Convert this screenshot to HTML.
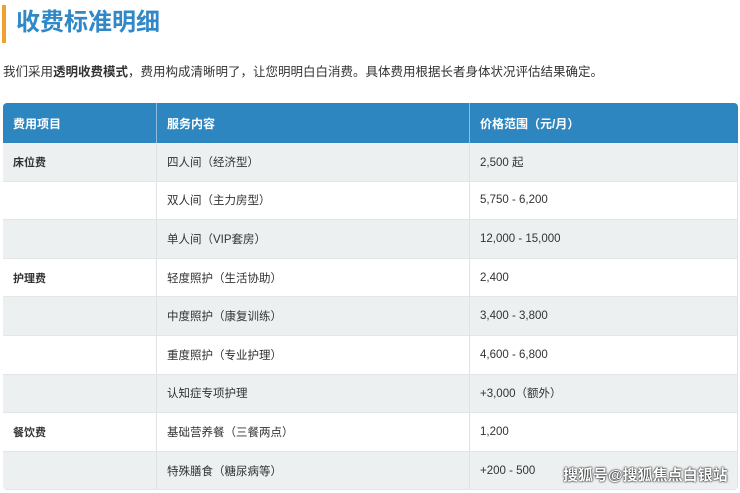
<!DOCTYPE html>
<html><head><meta charset="utf-8"><style>
body{margin:0;width:740px;height:493px;overflow:hidden;background:#fff;font-family:"Liberation Sans","Noto Sans CJK SC",sans-serif;color:#333}
.bar{position:absolute;left:2px;top:5px;width:4px;height:38px;background:#f0a030}
h1{position:absolute;left:16px;top:7px;margin:0;font-size:24px;line-height:32px;color:#3088c8;font-weight:bold}
p{position:absolute;left:3px;top:62px;margin:0;font-size:12.5px;line-height:20px;color:#333}
table{position:absolute;left:3px;top:103px;width:735px;border-collapse:collapse;font-size:11.5px;border-radius:4px;overflow:hidden}
th{background:#2e86c1;color:#fff;text-align:left;height:40px;padding:0 0 0 10px;font-size:12px;border-right:1px solid #8fbde0}
td{height:37.6px;padding:0 0 0 10px;border-right:1px solid #dde2e4;border-bottom:1px solid #e2e6e8}
tr:nth-child(odd) td{background:#ecf0f1}
tr:nth-child(even) td{background:#fff}
td:first-child{font-weight:bold;font-size:11px}
.wm{position:absolute;left:563px;top:464px;font-size:15px;color:#fff;font-weight:bold;text-shadow:0 0 2px #000,0 0 1px #000}
</style></head><body>
<div class="bar"></div>
<h1>收费标准明细</h1>
<p>我们采用<b>透明收费模式</b>，费用构成清晰明了，让您明明白白消费。具体费用根据长者身体状况评估结果确定。</p>
<table>
<thead><tr><th style="width:143px">费用项目</th><th style="width:302px">服务内容</th><th style="border-right:none">价格范围（元/月）</th></tr></thead>
<tbody>
<tr><td>床位费</td><td>四人间（经济型）</td><td>2,500 起</td></tr>
<tr><td></td><td>双人间（主力房型）</td><td>5,750 - 6,200</td></tr>
<tr><td></td><td>单人间（VIP套房）</td><td>12,000 - 15,000</td></tr>
<tr><td>护理费</td><td>轻度照护（生活协助）</td><td>2,400</td></tr>
<tr><td></td><td>中度照护（康复训练）</td><td>3,400 - 3,800</td></tr>
<tr><td></td><td>重度照护（专业护理）</td><td>4,600 - 6,800</td></tr>
<tr><td></td><td>认知症专项护理</td><td>+3,000（额外）</td></tr>
<tr><td>餐饮费</td><td>基础营养餐（三餐两点）</td><td>1,200</td></tr>
<tr><td></td><td>特殊膳食（糖尿病等）</td><td>+200 - 500</td></tr>
</tbody></table>
<div class="wm">搜狐号@搜狐焦点白银站</div>
</body></html>
